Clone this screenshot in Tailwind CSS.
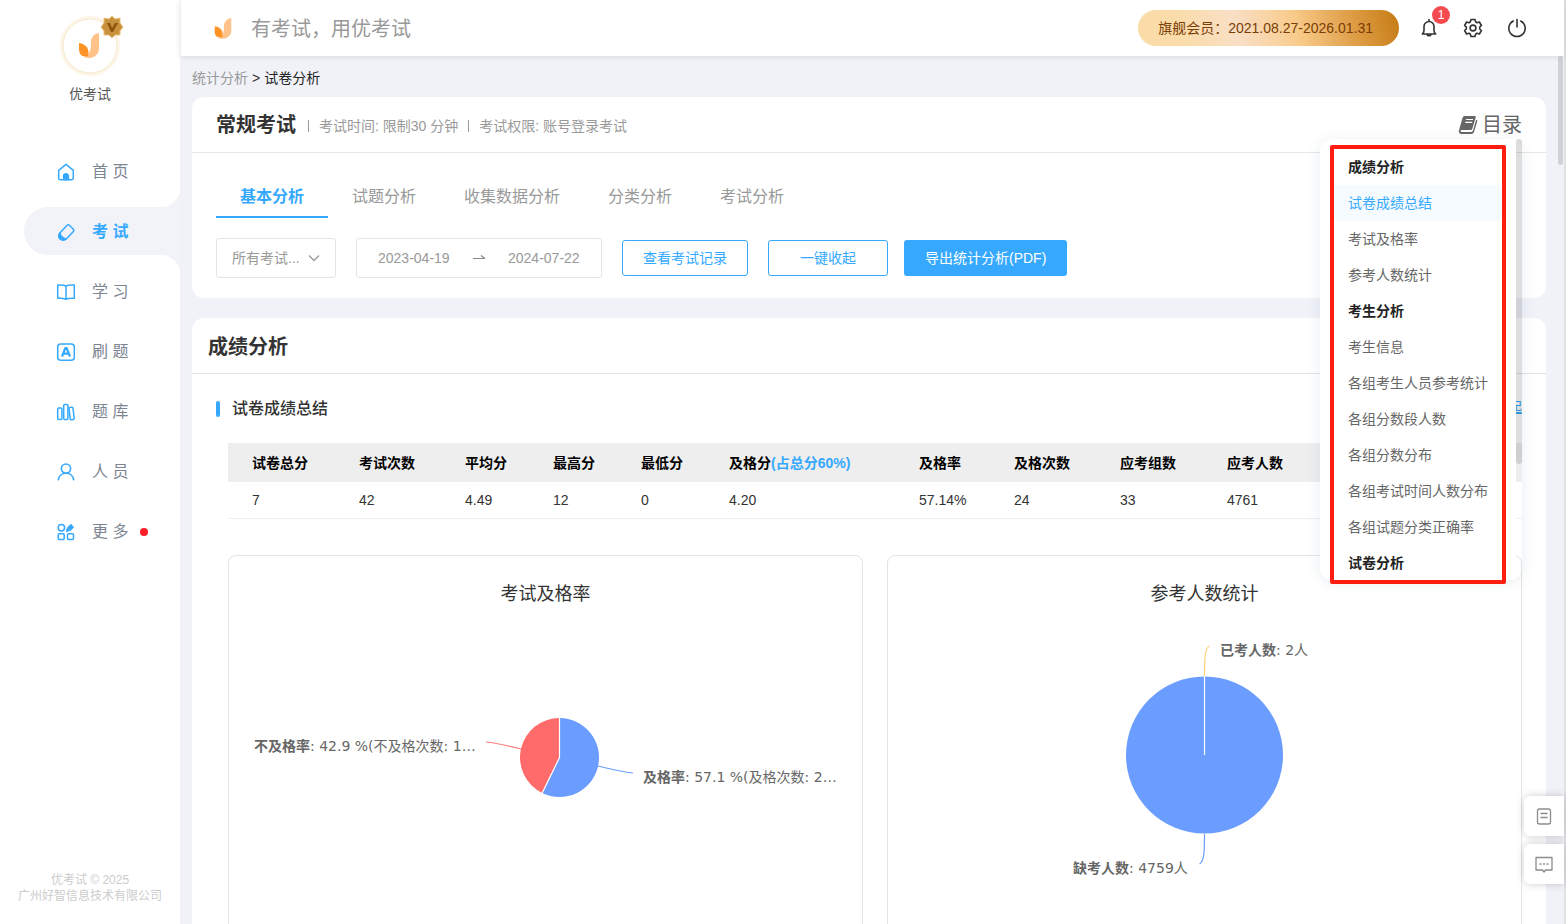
<!DOCTYPE html>
<html lang="zh-CN">
<head>
	<meta charset="UTF-8">
	<meta name="viewport" content="width=device-width, initial-scale=1.0">
	<script src="https://cdn.jsdelivr.net/npm/@tailwindcss/browser@4"></script>
	<title>试卷分析 - 优考试</title>
</head>
<body class="flex h-screen overflow-hidden bg-[#f0f2f8] font-['Liberation_Sans','Noto_Sans_CJK_SC',sans-serif] text-sm text-[#333]">
	<!-- Sidebar -->
	<aside class="flex w-[180px] shrink-0 flex-col bg-white">
		<div class="flex flex-col items-center pt-4">
			<div class="relative size-[60px]">
				<svg class="size-[60px]" viewBox="0 0 60 60" fill="none">
					<circle cx="30" cy="30" r="28.5" stroke="#fcf5e8" stroke-width="3"/>
					<circle cx="30" cy="30" r="27" stroke="#f7e9cf"/>
					<path d="M39 17c-6 1-8 5-8 10 0 6-1 12-7 14 8 3 15-1 15-9z" fill="#ffc38a"/>
					<path d="M19 27c7 1 11 6 9 13-6 2-9-2-9-7z" fill="#ff9326"/>
				</svg>
				<svg class="absolute -top-px left-10 size-6" viewBox="0 0 24 24">
					<path d="M12 1l3 3 5-1 0 5 3 4-3 4v4l-5 0-3 3-3-3-5 0v-4l-3-4 3-4V3l5 1z" fill="#c8923c" stroke="#e6c27e"/>
					<path d="M7 8l4 9h2l5-9-3 0-3 5-2-5z" fill="#8d560c"/>
				</svg>
			</div>
			<p class="mt-2 leading-5 text-[#555]">优考试</p>
		</div>
		<nav class="mt-[43px] flex flex-col gap-3 pl-6 text-base text-[#7d8592]">
			<a href="#" class="flex h-12 items-center gap-4 pt-0.5 pl-8">
				<svg class="size-5" viewBox="0 0 20 20" fill="none" stroke="#36a9ff" stroke-width="1.5" stroke-linejoin="round">
					<path d="M2.7 8.4 10 2.4l7.3 6v7.8a1.6 1.6 0 0 1-1.6 1.6H4.3a1.6 1.6 0 0 1-1.6-1.6z"/>
					<path d="M7.6 17.6v-3.4a2.4 2.4 0 0 1 4.8 0v3.4z" fill="#36a9ff"/>
				</svg>
				首 页
			</a>
			<a href="#" class="relative flex h-12 items-center gap-4 rounded-l-full bg-[#f2f3f8] pt-0.5 pl-8 font-bold text-[#36a9ff] before:absolute before:-top-5 before:right-0 before:size-5 before:bg-[radial-gradient(circle_at_0_0,transparent_20px,#f2f3f8_21px)] after:absolute after:-bottom-5 after:right-0 after:size-5 after:bg-[radial-gradient(circle_at_0_100%,transparent_20px,#f2f3f8_21px)]">
				<svg class="size-5" viewBox="0 0 20 20" fill="none" stroke="#36a9ff" stroke-width="1.5" stroke-linejoin="round">
					<path d="M11.2 3.3a1.6 1.6 0 0 1 2.2 0l4 4a1.6 1.6 0 0 1 0 2.2l-7.2 7.4c-1.6 1.6-4.8 1.4-6.3-.1s-1.6-4.2 0-5.9z"/>
					<path d="M3.9 10.9c.3 2.7 2.5 4.9 5.9 6.1-1.7 1.3-4.5 1.2-5.900-.2s-1.600-4.100 0-5.900z" fill="#36a9ff"/>
				</svg>
				考 试
			</a>
			<a href="#" class="flex h-12 items-center gap-4 pt-0.5 pl-8">
				<svg class="size-5" viewBox="0 0 20 20" fill="none" stroke="#36a9ff" stroke-width="1.5" stroke-linejoin="round">
					<path d="M10 4.2C8.5 3 5.5 2.7 1.7 3v13.3c3.8-.2 6.800 0 8.300 1.200 1.500-1.200 4.500-1.400 8.300-1.200V3c-3.800-.3-6.800 0-8.300 1.200zM10 4.200v13.300"/>
				</svg>
				学 习
			</a>
			<a href="#" class="flex h-12 items-center gap-4 pt-0.5 pl-8">
				<svg class="size-5" viewBox="0 0 20 20" fill="none" stroke="#36a9ff" stroke-width="1.5" stroke-linejoin="round">
					<rect x="1.7" y="2" width="16.6" height="16.2" rx="3"/>
					<path d="M6 14.5 9.4 6h1.200l3.400 8.500M7.400 11.600h5.200" stroke-width="2.200"/>
				</svg>
				刷 题
			</a>
			<a href="#" class="flex h-12 items-center gap-4 pt-0.5 pl-8">
				<svg class="size-5" viewBox="0 0 20 20" fill="none" stroke="#36a9ff" stroke-width="1.5" stroke-linejoin="round">
					<rect x="1.7" y="6" width="4.2" height="11.6" rx="1"/>
					<rect x="7.7" y="2.5" width="4.2" height="15.1" rx="1"/>
					<rect x="13.6" y="5.3" width="4" height="12.3" rx="1" transform="rotate(-7 15.6 11.5)"/>
				</svg>
				题 库
			</a>
			<a href="#" class="flex h-12 items-center gap-4 pt-0.5 pl-8">
				<svg class="size-5" viewBox="0 0 20 20" fill="none" stroke="#36a9ff" stroke-width="1.6" stroke-linecap="round">
					<circle cx="10" cy="6.6" r="4.6"/>
					<path d="M2.3 17.8c.5-4 3.7-6.6 7.7-6.6s7.2 2.6 7.7 6.6"/>
				</svg>
				人 员
			</a>
			<a href="#" class="flex h-12 items-center gap-4 pt-0.5 pl-8">
				<svg class="size-5" viewBox="0 0 20 20" fill="none" stroke="#36a9ff" stroke-width="1.5">
					<circle cx="5.4" cy="5.8" r="3.2"/>
					<rect x="2.2" y="11.7" width="6" height="5.7" rx="1"/>
					<rect x="11.5" y="11.7" width="6" height="5.7" rx="1"/>
					<path d="M13 7l3.500-3.500" stroke-width="4.600"/>
					<path d="M10.800 9.100l.6-2.700 2 2z" fill="#36a9ff"/>
				</svg>
				<span class="flex items-center gap-3">更 多 <i class="size-2 rounded-full bg-[#ff1d25]"></i></span>
			</a>
		</nav>
		<footer class="mt-auto pb-5 text-center text-xs leading-4 text-[#ccc]">
			<p>优考试 © 2025</p>
			<p>广州好智信息技术有限公司</p>
		</footer>
	</aside>

	<div class="relative flex min-w-0 flex-1 flex-col border-r-2 border-[#e0e1e5]">
		<!-- Top bar -->
		<header class="z-10 flex h-14 shrink-0 items-center border-l border-[#eeeff5] bg-white pr-[37px] pl-8 shadow-[0_1px_6px_rgba(0,0,0,0.1)]">
			<svg class="h-[22px] w-5" viewBox="0 0 20 24">
				<path d="M19 1c-6 1-8 5-8 10 0 6-1 11-7 12 8 2 15-1 15-8z" fill="#ffc38a"/>
				<path d="M1 10c7 1 10 6 8 12-6 1-8-2-8-6z" fill="#ff9326"/>
			</svg>
			<h1 class="ml-[18px] pt-0.5 text-xl text-[#999]">有考试，用优考试</h1>
			<div class="ml-auto flex h-9 items-center rounded-full bg-[linear-gradient(75deg,#fbdca6_0%,#fadcab_18%,#f9dfc6_38%,#f9cb8b_60%,#e0a04a_80%,#c57b13_100%)] pr-[26px] pl-5 text-[#7a3d06]">旗舰会员：2021.08.27-2026.01.31</div>
			<div class="ml-5 flex items-center gap-6">
				<button aria-label="通知" class="relative">
					<svg class="size-5" viewBox="0 0 20 20" fill="none" stroke="#333" stroke-width="1.6" stroke-linejoin="round" stroke-linecap="round">
						<path d="M10 1.500v1.700M3.300 16h13.400c-1.400-1.200-1.700-2-1.700-3.500V8.500a5 5 0 0 0-10 0v4c0 1.500-.3 2.300-1.700 3.500zM8 16.300c.3 2 3.700 2 4 0"/>
					</svg>
					<span class="absolute -top-3 left-[13px] flex size-[18px] items-center justify-center rounded-full bg-[#f54a50] text-xs text-white">1</span>
				</button>
				<button aria-label="设置">
					<svg class="size-5" viewBox="0 0 20 20" fill="none" stroke="#333" stroke-width="1.6" stroke-linejoin="round">
						<path d="M8 1.500h4l.6 2.300 1.500.9 2.300-.7 2 3.500-1.700 1.600v1.800l1.700 1.600-2 3.500-2.300-.7-1.500.9-.6 2.300H8l-.6-2.300-1.500-.9-2.300.7-2-3.500 1.700-1.600V9.100L1.600 7.500l2-3.500 2.300.7 1.500-.9z"/>
						<circle cx="10" cy="10" r="2.900"/>
					</svg>
				</button>
				<button aria-label="退出">
					<svg class="size-5" viewBox="0 0 20 20" fill="none" stroke="#333" stroke-width="1.6" stroke-linecap="round">
						<path d="M10 1.500v7.500M6.300 3a8.200 8.200 0 1 0 7.400 0"/>
					</svg>
				</button>
			</div>
		</header>

		<!-- Page content -->
		<main class="min-h-0 flex-1 overflow-hidden pr-[18px] pl-3">
			<div class="flex h-[41px] items-center gap-1 pt-0.5">
				<a href="#" class="text-[#999]">统计分析</a>
				<span>&gt;</span>
				<span class="text-[#222]">试卷分析</span>
			</div>

			<section class="rounded-xl bg-white pb-5">
				<div class="flex h-14 items-center border-b border-[#e6e6e6] px-6">
					<h2 class="text-xl font-bold">常规考试</h2>
					<p class="ml-3 flex items-center gap-2.5 pt-0.5 text-[#999]">
						<span class="h-3 w-px bg-[#999]"></span>
						考试时间: 限制30 分钟
						<span class="h-3 w-px bg-[#999]"></span>
						考试权限: 账号登录考试
					</p>
					<div class="relative z-20 ml-auto">
						<button id="catalog-button" class="flex items-center gap-1 text-xl text-[#666]">
							<svg class="size-5" viewBox="0 0 20 20">
								<path d="M6.500 1h10c1 0 1.400.6 1.200 1.400l-3.300 11c-.3 1-1 1.500-2 1.500H3.500c-1.300 0-1.300 2 .2 2h9.500c.9 0 1.500-.4 1.800-1.300l3.200-10.800c1 .3 1.300 1 1 1.800l-3.200 10.500c-.4 1.300-1.400 2-2.700 2H3.500C1.500 19 .3 17.200 1 15.300L4.500 3c.4-1.300 1-2 2-2z" fill="#666"/>
								<path d="M8 4.500h7M7.200 7.300h7" stroke="#fff" stroke-width="1.200"/>
							</svg>
							目录
						</button>
						<div id="catalog" class="absolute top-7 right-0 w-[202px] rounded-xl shadow-[0_2px_14px_rgba(60,100,130,0.12)]">
							<ul class="mr-1.5 h-[441px] overflow-hidden rounded-l-xl bg-white px-3 pt-2.5 leading-9 text-[#666]">
								<li class="px-4 font-bold text-[#222]">成绩分析</li>
								<li class="bg-[#f5fbff] px-4 text-[#36a9ff]"><a href="#summary">试卷成绩总结</a></li>
								<li class="px-4"><a href="#pass">考试及格率</a></li>
								<li class="px-4"><a href="#count">参考人数统计</a></li>
								<li class="px-4 font-bold text-[#222]">考生分析</li>
								<li class="px-4"><a href="#">考生信息</a></li>
								<li class="px-4"><a href="#">各组考生人员参考统计</a></li>
								<li class="px-4"><a href="#">各组分数段人数</a></li>
								<li class="px-4"><a href="#">各组分数分布</a></li>
								<li class="px-4"><a href="#">各组考试时间人数分布</a></li>
								<li class="px-4"><a href="#">各组试题分类正确率</a></li>
								<li class="px-4 font-bold text-[#222]">试卷分析</li>
							</ul>
							<span class="absolute top-0 right-0 h-[325px] w-1.5 rounded-full bg-black/13"></span>
							<span class="pointer-events-none absolute top-1.5 -bottom-1 right-4 left-2.5 rounded-xs border-4 border-[#ff1d10]"></span>
						</div>
					</div>
				</div>

				<!-- Tabs -->
				<div class="flex px-6 pt-5 text-base text-[#999]">
					<button class="h-[45px] border-b-2 border-[#36a9ff] px-6 pt-1 font-bold text-[#36a9ff]">基本分析</button>
					<button class="h-[45px] border-b-2 border-transparent px-6 pt-1">试题分析</button>
					<button class="h-[45px] border-b-2 border-transparent px-6 pt-1">收集数据分析</button>
					<button class="h-[45px] border-b-2 border-transparent px-6 pt-1">分类分析</button>
					<button class="h-[45px] border-b-2 border-transparent px-6 pt-1">考试分析</button>
				</div>

				<!-- Filters -->
				<div class="flex items-center px-6 pt-5">
					<div class="relative">
						<select aria-label="考试范围" class="h-10 w-[120px] appearance-none rounded-[3px] border border-[#e4e4e4] bg-white pl-[15px] text-[#999]">
							<option>所有考试...</option>
						</select>
						<svg class="pointer-events-none absolute top-3.5 right-4 size-3" viewBox="0 0 12 12" fill="none" stroke="#999" stroke-width="1.300">
							<path d="M1 3.500l5 5 5-5"/>
						</svg>
					</div>
					<div class="ml-5 flex h-10 w-[246px] items-center justify-between rounded-[3px] border border-[#e4e4e4] px-[21px] text-[#999]">
						<input aria-label="开始日期" type="text" value="2023-04-19" class="w-[72px] outline-none">
						<svg class="h-3 w-3" viewBox="0 0 12 12" fill="none" stroke="#888" stroke-width="1.200">
							<path d="M0 6.500h12l-4-3"/>
						</svg>
						<input aria-label="结束日期" type="text" value="2024-07-22" class="w-[72px] outline-none">
					</div>
					<button class="ml-5 h-9 rounded-[3px] border border-[#36a9ff] px-5 text-[#36a9ff]">查看考试记录</button>
					<button class="ml-5 h-9 w-[120px] rounded-[3px] border border-[#36a9ff] text-[#36a9ff]">一键收起</button>
					<button class="ml-4 h-9 rounded-[3px] bg-[#36a9ff] px-[21px] text-white">导出统计分析(PDF)</button>
				</div>
			</section>

			<section class="mt-5 rounded-t-xl bg-white">
				<div class="flex h-14 items-center border-b border-[#e0e3e5] px-4 pt-0.5">
					<h2 class="text-xl font-bold">成绩分析</h2>
				</div>
				<div id="summary" class="flex h-12 items-center px-6 pt-[22px]">
					<span class="h-4 w-1 rounded-xs bg-[#36a9ff]"></span>
					<h3 class="ml-3 text-base font-medium">试卷成绩总结</h3>
					<a href="#" class="ml-auto pb-1 text-[#36a9ff] underline">收起</a>
				</div>
				<div class="pt-[21px] pr-6 pl-9">
					<table class="w-full table-fixed text-left">
						<colgroup>
							<col class="w-[107px]">
							<col class="w-[106px]">
							<col class="w-[88px]">
							<col class="w-[88px]">
							<col class="w-[88px]">
							<col class="w-[190px]">
							<col class="w-[95px]">
							<col class="w-[106px]">
							<col class="w-[107px]">
							<col>
						</colgroup>
						<thead class="bg-[#eee] text-black">
							<tr class="h-[39px]">
								<th class="pl-6">试卷总分</th>
								<th class="pl-6">考试次数</th>
								<th class="pl-6">平均分</th>
								<th class="pl-6">最高分</th>
								<th class="pl-6">最低分</th>
								<th class="pl-6">及格分<span class="text-[#36a9ff]">(占总分60%)</span></th>
								<th class="pl-6">及格率</th>
								<th class="pl-6">及格次数</th>
								<th class="pl-6">应考组数</th>
								<th class="pl-6">应考人数</th>
							</tr>
						</thead>
						<tbody>
							<tr class="h-9 border-b border-[#eee]">
								<td class="pl-6">7</td>
								<td class="pl-6">42</td>
								<td class="pl-6">4.49</td>
								<td class="pl-6">12</td>
								<td class="pl-6">0</td>
								<td class="pl-6">4.20</td>
								<td class="pl-6">57.14%</td>
								<td class="pl-6">24</td>
								<td class="pl-6">33</td>
								<td class="pl-6">4761</td>
							</tr>
						</tbody>
					</table>

					<!-- Charts -->
					<div class="mt-9 grid grid-cols-2 gap-6">
						<div id="pass" class="h-[420px] rounded-lg border border-[#e4e4e4] pt-6">
							<h4 class="text-center text-lg">考试及格率</h4>
							<svg class="h-[300px] w-full font-['DejaVu_Sans','Noto_Sans_CJK_SC',sans-serif] text-sm" viewBox="0 0 633 300" fill="none">
								<path d="M330.500 149.500V110a39.500 39.500 0 1 1-17.300 75z" fill="#6a9dff"/>
								<path d="M330.500 149.500 313.200 185A39.500 39.500 0 0 1 330.500 110z" fill="#ff6b6b"/>
								<path d="M330.500 110v39.500L313.200 185" stroke="#fff" stroke-width="1.200"/>
								<path d="M257 134c10 1 23 4 35 7" stroke="#ff8080" stroke-width="1.200"/>
								<path d="M369 158c12 3 24 6 35 7" stroke="#6a9dff" stroke-width="1.200"/>
								<g class="font-['Noto_Sans_CJK_SC',sans-serif] font-bold" fill="#666">
									<text x="25" y="143">不及格率</text>
									<text x="414" y="174">及格率</text>
								</g>
								<text x="81" y="143" fill="#666">: 42.9 %(不及格次数: 1…</text>
								<text x="456" y="174" fill="#666">: 57.1 %(及格次数: 2…</text>
							</svg>
						</div>
						<div id="count" class="h-[420px] rounded-lg border border-[#e4e4e4] pt-6">
							<h4 class="text-center text-lg">参考人数统计</h4>
							<svg class="h-[300px] w-full font-['DejaVu_Sans','Noto_Sans_CJK_SC',sans-serif] text-sm" viewBox="0 0 633 300" fill="none">
								<circle cx="316.500" cy="147" r="78.500" fill="#6a9dff"/>
								<path d="M316.500 68v79" stroke="#fff" stroke-width="1.200"/>
								<path d="M316.500 68c0-14 0-28 5-30" stroke="#ffd27a" stroke-width="1.200"/>
								<path d="M316.500 226c0 14 0 28-5 30" stroke="#6a9dff" stroke-width="1.200"/>
								<g class="font-['Noto_Sans_CJK_SC',sans-serif] font-bold" fill="#666">
									<text x="332" y="47">已考人数</text>
									<text x="185" y="265">缺考人数</text>
								</g>
								<text x="388" y="47" fill="#666">: 2人</text>
								<text x="241" y="265" fill="#666">: 4759人</text>
							</svg>
						</div>
					</div>
				</div>
			</section>
		</main>

		<!-- Scroll thumb -->
		<span class="absolute top-14 right-px h-[109px] w-[5px] rounded-full bg-[#d0d2d8]"></span>

		<!-- Floating tools -->
		<div class="absolute right-0 bottom-10 z-10 flex flex-col gap-2">
			<button aria-label="记录" class="flex size-10 items-center justify-center rounded-l-md bg-white shadow-[0_0_8px_rgba(0,0,0,0.2)]">
				<svg class="size-5" viewBox="0 0 20 20" fill="none" stroke="#8c8c8c" stroke-width="1.300">
					<rect x="3.500" y="3" width="13" height="15" rx="2"/>
					<path d="M6.500 7.500h7M6.500 11.500h7"/>
				</svg>
			</button>
			<button aria-label="反馈" class="flex size-10 items-center justify-center rounded-l-md bg-white shadow-[0_0_8px_rgba(0,0,0,0.2)]">
				<svg class="size-5" viewBox="0 0 20 20" fill="none" stroke="#8c8c8c" stroke-width="1.300" stroke-linejoin="round">
					<path d="M2 3.500h16V16h-6.500L10 18l-1.500-2H2z"/>
					<path d="M5.500 10h2M9 10h2M12.500 10h2" stroke-width="1.600"/>
				</svg>
			</button>
		</div>
	</div>
	<script>
		const catalogButton = document.getElementById("catalog-button");
		catalogButton.addEventListener("click", function() {
			document.getElementById("catalog").classList.toggle("hidden");
		});
	</script>
</body>
</html>
